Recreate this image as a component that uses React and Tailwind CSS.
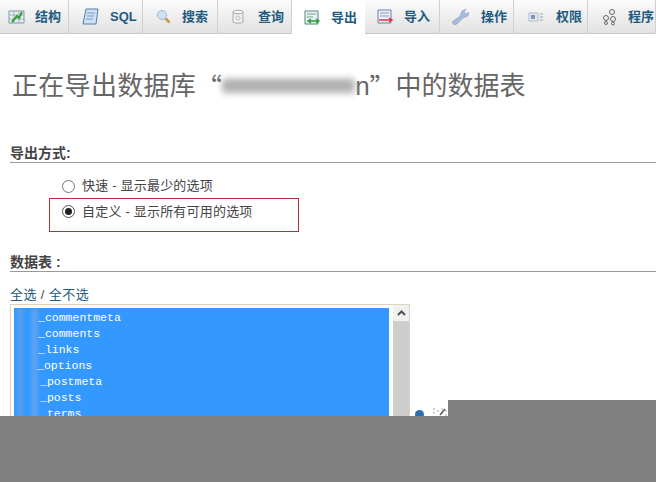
import React from 'react';

const CJK = 'font-["Liberation_Sans","Noto_Sans_CJK_SC",sans-serif]';

function TabIcon({ name }) {
  if (name === 'structure') {
    return (
      <svg width="18" height="16" viewBox="0 0 18 16">
        <path d="M1 2h15v12H1z" fill="#e8eef0" stroke="#7d9aa8" />
        <path d="M6 2v12M11 2v12M1 6h15M1 10h15" stroke="#9fb4be" />
        <path d="M4 13l5-6 2 2 3-6" fill="none" stroke="#3f9a3a" strokeWidth="2" />
      </svg>
    );
  }
  if (name === 'sql') {
    return (
      <svg width="18" height="17" viewBox="0 0 18 17">
        <path d="M4 1h12l-2 15H1z" fill="#cfe0f2" stroke="#4f7fa8" />
        <path d="M5 5h8M5 8h7M4 11h7" stroke="#6f9cc4" />
      </svg>
    );
  }
  if (name === 'search') {
    return (
      <svg width="18" height="16" viewBox="0 0 18 16">
        <circle cx="7" cy="6" r="4.5" fill="#cfe2f2" stroke="#9fb8cc" />
        <path d="M10.5 9.5l4 4" stroke="#c49a50" strokeWidth="2.5" />
      </svg>
    );
  }
  if (name === 'query') {
    return (
      <svg width="14" height="16" viewBox="0 0 14 16">
        <path d="M2 3v10c0 1.500 10 1.500 10 0V3z" fill="#efefef" stroke="#a8a8a8" />
        <ellipse cx="7" cy="3" rx="5" ry="1.800" fill="#f8f8f8" stroke="#a8a8a8" />
        <circle cx="7" cy="9" r="2" fill="none" stroke="#bbbbbb" />
      </svg>
    );
  }
  if (name === 'export') {
    return (
      <svg width="17" height="16" viewBox="0 0 17 16">
        <path d="M1 1h13v13H1z" fill="#e6f0ee" stroke="#4f8a80" />
        <path d="M3 4h9M3 7h6" stroke="#7aa49c" />
        <path d="M4 11h11M7 9l-3 2 3 2M12 9l3 2-3 2" fill="none" stroke="#2f9a3a" strokeWidth="1.300" />
      </svg>
    );
  }
  if (name === 'import') {
    return (
      <svg width="17" height="16" viewBox="0 0 17 16">
        <path d="M1 1h13v13H1z" fill="#eef0f6" stroke="#6f7fa0" />
        <path d="M3 4h9M3 7h9" stroke="#8a98b8" />
        <path d="M2 11h13M12 9l3 2-3 2" fill="none" stroke="#e0304a" strokeWidth="1.500" />
      </svg>
    );
  }
  if (name === 'ops') {
    return (
      <svg width="18" height="18" viewBox="0 0 18 18">
        <path d="M3 17l-2-3 8-6 2-5 4-2-2 3 2 2 3-2-1 4-5 2-6 6z" fill="#a4bcdc" stroke="#8aa4c8" strokeWidth="0.600" />
      </svg>
    );
  }
  if (name === 'priv') {
    return (
      <svg width="16" height="12" viewBox="0 0 16 12">
        <path d="M1 2h9v8H1z" fill="#e4e8f0" stroke="#b0bac8" />
        <path d="M3 4h4v4H3z" fill="#7f94b4" />
        <path d="M12 3h3M12 6h3M12 9h3" stroke="#a0a8b4" />
      </svg>
    );
  }
  return (
    <svg width="18" height="18" viewBox="0 0 18 18" fill="none" stroke="#666666">
      <circle cx="11" cy="4" r="2.500" />
      <circle cx="5" cy="10" r="2.500" />
      <circle cx="12" cy="11" r="2.500" />
      <circle cx="5" cy="15" r="1.500" />
      <circle cx="12" cy="15.500" r="1.500" />
    </svg>
  );
}

const TABS = [
  { label: '结构', icon: 'structure', w: 'w-[69px]', pl: 'pl-[8px]', gap: 'gap-[9px]' },
  { label: 'SQL', icon: 'sql', w: 'w-[74px]', pl: 'pl-[13px]', gap: 'gap-[10px]' },
  { label: '搜索', icon: 'search', w: 'w-[75px]', pl: 'pl-[12px]', gap: 'gap-[9px]' },
  { label: '查询', icon: 'query', w: 'w-[74px]', pl: 'pl-[13px]', gap: 'gap-[13px]' },
  { label: '导出', icon: 'export', w: 'w-[73px]', pl: 'pl-[12px]', gap: 'gap-[10px]', active: true },
  { label: '导入', icon: 'import', w: 'w-[75px]', pl: 'pl-[12px]', gap: 'gap-[10px]' },
  { label: '操作', icon: 'ops', w: 'w-[74px]', pl: 'pl-[11px]', gap: 'gap-[12px]' },
  { label: '权限', icon: 'priv', w: 'w-[74px]', pl: 'pl-[14px]', gap: 'gap-[12px]' },
  { label: '程序', icon: 'routines', w: 'w-[68px]', pl: 'pl-[13px]', gap: 'gap-[9px]' },
];

const TABLES = ['_commentmeta', '_comments', '_links', '_options', '_postmeta', '_posts', '_terms'];
const TABLE_PAD = ['pl-[24px]', 'pl-[24px]', 'pl-[24px]', 'pl-[23px]', 'pl-[26px]', 'pl-[26px]', 'pl-[26px]'];

function Tab({ tab }) {
  return (
    <div
      className={`${tab.w} ${tab.pl} ${tab.gap} h-[34px] shrink-0 flex items-center box-border ${
        tab.active
          ? 'h-[36px] bg-white'
          : 'bg-gradient-to-b from-[#fbfbfb] to-[#e2e2e2] border-r border-b border-r-[#cfcfcf] border-b-[#c8c8c8]'
      }`}
    >
      <TabIcon name={tab.icon} />
      <span className="text-[13px] font-bold text-[#235a81] whitespace-nowrap">{tab.label}</span>
    </div>
  );
}

function Section({ title, className }) {
  return (
    <div className={`text-[14px] font-bold leading-[16px] text-[#444444] border-b border-[#999999] ml-[10px] pb-[1px] ${className}`}>
      {title}
    </div>
  );
}

export default function App() {
  return (
    <div className={`relative w-[656px] h-[482px] overflow-hidden bg-white ${CJK}`}>
      <div className="flex items-start h-[36px]">
        {TABS.map((t) => (
          <Tab key={t.label} tab={t} />
        ))}
      </div>

      <h2 className="mt-[33px] ml-[12px] flex items-center text-[26px] leading-[34px] font-normal text-[#666666] whitespace-nowrap">
        <span className="tracking-[0.3px]">正在导出数据库</span>
        <span className='font-["Noto_Sans_CJK_SC",sans-serif]'>“</span>
        <span className="w-[133px] h-[16px] rounded-sm bg-gradient-to-b from-[#c4c4c4] via-[#a8a8a8] to-[#cccccc] blur-[3px]" />
        <span>n</span>
        <span className='font-["Noto_Sans_CJK_SC",sans-serif]'>”</span>
        <span>中的数据表</span>
      </h2>

      <Section title="导出方式:" className="mt-[42px]" />

      <div className="mt-[14px] ml-[62px] flex items-center h-[18px] text-[13px] tracking-[0.2px] text-[#444444]">
        <span className="w-[13px] h-[13px] rounded-full border border-[#777777] bg-white" />
        <span className="ml-[7px]">快速 - 显示最少的选项</span>
      </div>

      <div className="mt-[3px] ml-[49px] w-[250px] h-[34px] border border-[#b03038] box-border pt-[4px] pl-[12px] flex items-start text-[13px] tracking-[0.2px] text-[#444444]">
        <span className="mt-[2px] w-[13px] h-[13px] rounded-full border border-[#555555] bg-white flex items-center justify-center">
          <span className="w-[7px] h-[7px] rounded-full bg-[#222222]" />
        </span>
        <span className="ml-[7px] leading-[18px]">自定义 - 显示所有可用的选项</span>
      </div>

      <Section title="数据表 :" className="mt-[22px]" />

      <div className="mt-[14px] ml-[10px] text-[13px] tracking-[0.4px] leading-[18px] text-[#235a81]">
        全选 <span className="text-[#444444]">/</span> 全不选
      </div>

      <div className="ml-[10px] w-[400px] h-[130px] border border-[#ddd6bc] box-border flex bg-white">
        <div className="relative w-[378px] ml-[3px] mt-[3px] bg-[#3399ff] overflow-hidden font-['Liberation_Mono',monospace] text-[11.5px] leading-[16px] text-white">
          <div className="absolute left-[3px] top-0 w-[6px] h-full bg-[#5a9ef0] blur-[2px]" />
          <div className="absolute left-[18px] top-0 w-[5px] h-full bg-[#6aa4ee] blur-[2px]" />
          <div className="pt-[2px]">
            {TABLES.map((t, i) => (
              <div key={t} className={`relative ${TABLE_PAD[i]}`}>
                {t}
              </div>
            ))}
          </div>
        </div>
        <div className="ml-[4px] w-[16px] bg-[#cdcdcd]">
          <div className="h-[16px] bg-[#f1f1f1] flex items-center justify-center">
            <svg width="9" height="6" viewBox="0 0 9 6">
              <path d="M1 5l3.500-3.500L8 5" fill="none" stroke="#505050" strokeWidth="2" />
            </svg>
          </div>
        </div>
      </div>

      {/* bits of the page peeking out above the gray overlay */}
      <div className="absolute left-[415px] top-[410px] w-[9px] h-[9px] rounded-full bg-[#2a6fb0]" />
      <svg className="absolute left-[432px] top-[407px]" width="16" height="9" viewBox="0 0 16 9">
        <path d="M1 1h2v2H1zM5 3h2v2H5zM1 5h2v2H1zM9 1h2v2H9zM13 3h2v2h-2zM9 5h2v2H9zM13 7h2v2h-2z" fill="#cfd4d8" />
        <path d="M8 8l5-6" stroke="#555555" strokeWidth="1.500" />
      </svg>
      <div className="absolute left-0 right-0 top-[416px] bottom-0 bg-[#808080]" />
      <div className="absolute left-[448px] right-0 top-[400px] h-[16px] bg-[#808080]" />
    </div>
  );
}
